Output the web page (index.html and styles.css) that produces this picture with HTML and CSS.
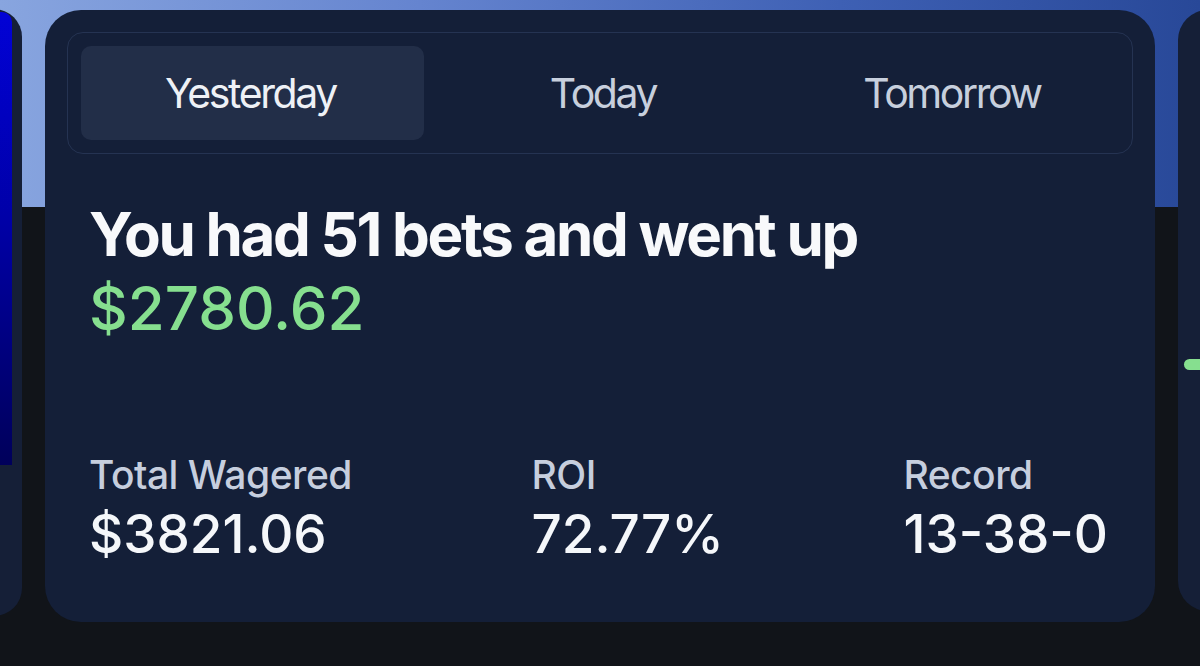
FILE: index.html
```html
<!DOCTYPE html>
<html lang="en">
<head>
<meta charset="utf-8">
<title>Bets summary</title>
<link rel="stylesheet" href="styles.css">
</head>
<body>
<div class="stage">
  <div class="carousel">
    <div class="side-card side-left">
      <div class="blue-panel"></div>
    </div>
    <div class="card">
      <div class="tabs">
        <div class="tab active">Yesterday</div>
        <div class="tab tab-mid">Today</div>
        <div class="tab tab-end">Tomorrow</div>
      </div>
      <div class="summary">
        <div class="headline">You had 51 bets and went up</div>
        <div class="amount">$2780.62</div>
      </div>
      <div class="stats">
        <div class="stat">
          <div class="stat-label">Total Wagered</div>
          <div class="stat-value">$3821.06</div>
        </div>
        <div class="stat">
          <div class="stat-label">ROI</div>
          <div class="stat-value">72.77%</div>
        </div>
        <div class="stat">
          <div class="stat-label">Record</div>
          <div class="stat-value">13-38-0</div>
        </div>
      </div>
    </div>
    <div class="side-card side-right">
      <div class="green-pill"></div>
    </div>
  </div>
</div>
</body>
</html>
```
FILE: styles.css
```css
* { box-sizing: border-box; }

html, body {
  margin: 0;
  padding: 0;
  width: 1200px;
  height: 666px;
  overflow: hidden;
}

body {
  font-family: Inter, "Noto Sans", sans-serif;
  background:
    linear-gradient(to bottom, rgba(0,0,0,0) 0, rgba(0,0,0,0) 207px, #111419 207px, #111419 100%),
    linear-gradient(90deg, #88a5df 0%, #6584cf 35%, #3e60b4 70%, #284898 100%);
}

.stage {
  width: 1200px;
  height: 666px;
  overflow: hidden;
}

.carousel {
  display: flex;
  align-items: flex-start;
  gap: 23px;
  margin-left: -178px;
}

.side-card {
  flex: 0 0 auto;
  background: #151f37;
}

.side-left {
  width: 200px;
  height: 607px;
  margin-top: 9px;
  border-radius: 0 28px 28px 0;
  padding-top: 3px;
}

.blue-panel {
  width: 190px;
  height: 453px;
  border-radius: 0 10px 0 0;
  background: linear-gradient(to bottom, #0202d6 0%, #0000a8 45%, #00005a 100%);
}

.side-right {
  width: 200px;
  height: 601px;
  margin-top: 10px;
  border-radius: 30px 0 0 30px;
  padding-top: 349px;
  padding-left: 6px;
}

.green-pill {
  width: 40px;
  height: 11px;
  border-radius: 6px;
  background: #86df8f;
}

.card {
  flex: 0 0 1110px;
  width: 1110px;
  height: 612px;
  margin-top: 10px;
  background: #141f38;
  border-radius: 36px;
  padding: 22px;
}

.tabs {
  display: grid;
  grid-template-columns: 1fr 1fr 1fr;
  height: 122px;
  padding: 13px;
  border: 1.5px solid #253352;
  border-radius: 16px;
}

.tab {
  display: flex;
  align-items: center;
  justify-content: center;
  font-size: 41px;
  font-weight: 400;
  letter-spacing: -2.4px;
  color: #c7cfdd;
  border-radius: 10px;
}

.tab.active {
  background: #222e48;
  color: #eef1f6;
  margin-right: 3px;
  padding-right: 4px;
}

.tab-mid { padding-left: 6px; }
.tab-end { padding-left: 12px; }

.summary {
  margin-top: 43px;
  padding: 0 25px 0 22px;
}

.headline {
  font-size: 60px;
  line-height: 74px;
  font-weight: 700;
  letter-spacing: -2.3px;
  color: #f8f9fb;
}

.amount {
  font-size: 60px;
  line-height: 74px;
  font-weight: 500;
  letter-spacing: 0;
  color: #86df8f;
}

.stats {
  display: flex;
  justify-content: space-between;
  margin-top: 106px;
  padding: 0 25px 0 22px;
}

.stat-label {
  font-size: 39px;
  line-height: 48px;
  font-weight: 500;
  letter-spacing: -0.5px;
  color: #c6cede;
}

.stat-value {
  margin-top: 6px;
  font-size: 53px;
  line-height: 58px;
  font-weight: 500;
  letter-spacing: 0;
  color: #f5f7fa;
}
```
